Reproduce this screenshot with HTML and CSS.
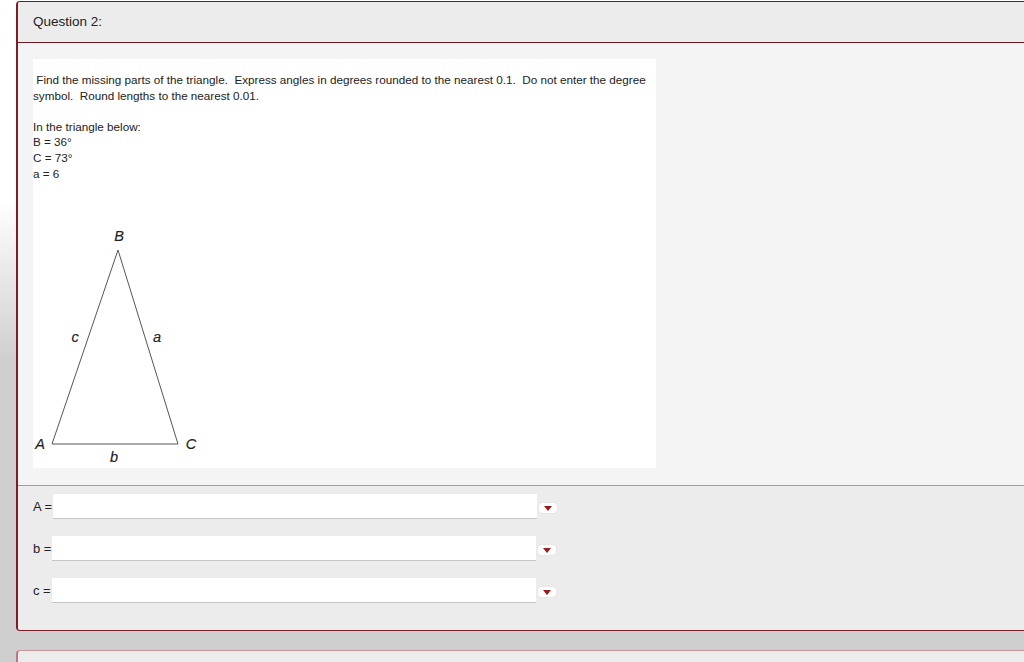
FILE: index.html
```html
<!DOCTYPE html>
<html lang="en">

<head>
    <meta charset="UTF-8">
    <meta name="viewport" content="width=device-width, initial-scale=1.0">
    <title>Question 2</title>
    <link rel="stylesheet" href="styles.css">
</head>

<body>
    <div class="page">
        <div class="card">
            <div class="cardHead">Question 2:</div>
            <div class="cardBody">
                <div class="problem">
                    <div class="text">
                        &nbsp;Find the missing parts of the triangle.&nbsp; Express angles in degrees rounded to the nearest 0.1.&nbsp; Do not enter the degree symbol.&nbsp; Round lengths to the nearest 0.01.<br><br>
                        In the triangle below:<br>
                        B = 36&deg;<br>
                        C = 73&deg;<br>
                        a = 6
                    </div>
                    <svg class="triangle" width="180" height="285" viewBox="0 0 180 285">
                        <polygon points="85,68 19,262 145,262" fill="none" stroke="#555" stroke-width="1" />
                        <text x="86" y="59" text-anchor="middle">B</text>
                        <text x="7" y="267" text-anchor="middle">A</text>
                        <text x="158" y="267" text-anchor="middle">C</text>
                        <text x="81" y="280" text-anchor="middle">b</text>
                        <text x="42" y="160" text-anchor="middle">c</text>
                        <text x="124" y="160" text-anchor="middle">a</text>
                    </svg>
                </div>
            </div>
            <div class="answers">
                <div class="row">
                    <span class="label">A =</span><span class="field"></span><span class="drop"><span class="arrow"></span></span>
                </div>
                <div class="row">
                    <span class="label">b =</span><span class="field"></span><span class="drop"><span class="arrow"></span></span>
                </div>
                <div class="row">
                    <span class="label">c =</span><span class="field"></span><span class="drop"><span class="arrow"></span></span>
                </div>
            </div>
        </div>
        <div class="card next"></div>
    </div>
</body>

</html>
```

FILE: styles.css
```css
body {
    margin: 0;
    height: 662px;
    overflow: hidden;
    background: linear-gradient(to bottom, #fff 0, #fff 200px, #cfcfcf 360px, #cfcfcf 100%);
    font-family: "Liberation Sans", Arial, sans-serif;
    color: #222;
}

.page {
    padding: 1px 0 0 16px;
}

.card {
    width: 1020px;
    border-left: 2px solid #7d1d28;
    border-top: 1px solid #6e1a22;
    border-bottom: 1px solid #7d1d28;
    border-radius: 4px 0 0 4px;
    overflow: hidden;
}

.cardHead {
    height: 40px;
    line-height: 40px;
    padding-left: 15px;
    background: #ececec;
    border-bottom: 1px solid #6e1a22;
    font-size: 13.5px;
}

.cardBody {
    background: #f4f4f4;
    padding: 16px 0 17px 15px;
}

.problem {
    width: 623px;
    height: 409px;
    background: #fff;
}

.text {
    padding-top: 13px;
    font-size: 11.7px;
    line-height: 15.6px;
}

.triangle {
    display: block;
    margin-top: 1px;
}

.triangle text {
    font-family: "Liberation Sans", Arial, sans-serif;
    font-style: italic;
    font-size: 14.5px;
    fill: #222;
    stroke: #222;
    stroke-width: 0.15;
}

.answers {
    background: #ececec;
    border-top: 1px solid #c98b91;
    padding: 8px 0 27px 15px;
}

.row {
    display: flex;
    align-items: center;
    height: 25px;
    margin-bottom: 17px;
}

.row:last-child {
    margin-bottom: 0;
}

.label {
    font-size: 13px;
    margin-right: 1px;
}

.field {
    width: 484px;
    height: 24px;
    background: #fff;
    border-bottom: 1px solid #c6c6c6;
}

.drop {
    display: flex;
    align-items: center;
    justify-content: center;
    width: 18px;
    height: 10px;
    margin: 3px 0 0 2px;
    background: #fff;
    border-radius: 3px;
    box-shadow: 0 0 1px #bbb;
}

.arrow {
    width: 0;
    height: 0;
    border-left: 4px solid transparent;
    border-right: 4px solid transparent;
    border-top: 5px solid #9a1b1b;
}

.next {
    margin-top: 19px;
    height: 40px;
    background: #ececec;
    border-left-color: #b97880;
    border-top-color: #c4969b;
    border-bottom: none;
}
```
